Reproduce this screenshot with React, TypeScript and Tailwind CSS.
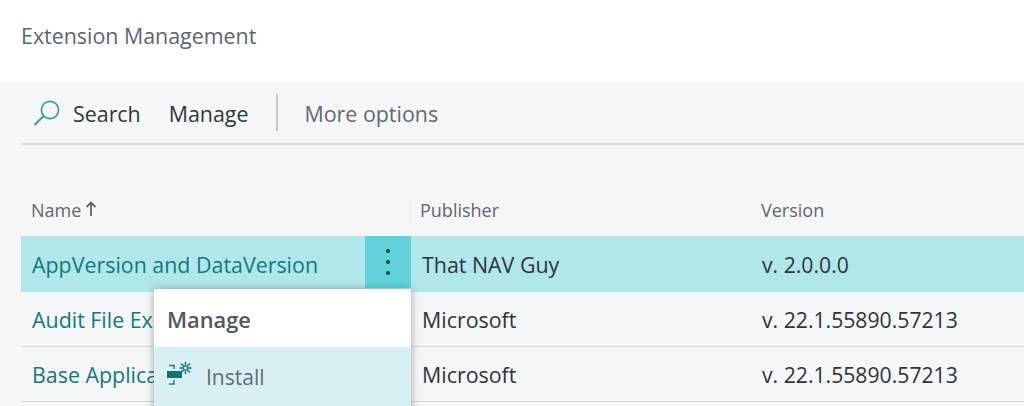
const font = { fontFamily: '"Open Sans", "Noto Sans", sans-serif' };

function SearchIcon() {
  return (
    <svg width="28" height="28" viewBox="0 0 28 28" fill="none" stroke="#3f9d97" strokeWidth="1.7">
      <circle cx="17" cy="11" r="8.6" />
      <path d="M10.7 17 L1.5 26" strokeWidth="2" />
    </svg>
  );
}

function InstallIcon() {
  return (
    <svg width="27" height="24" viewBox="0 0 27 24" fill="none">
      <path d="M3 3.5H8V7" stroke="#1f7f7c" strokeWidth="1.4" />
      <rect x="1" y="9" width="15" height="7" fill="#0c7577" />
      <path d="M3 22H8V18" stroke="#1f7f7c" strokeWidth="1.4" />
      <path d="M19.5 0V12M13.5 6H25.5M15 1.5L24 10.5M24 1.5L15 10.5" stroke="#0c7577" strokeWidth="1.5" />
      <circle cx="19.5" cy="6" r="1.5" fill="#d9f0f3" />
    </svg>
  );
}

function Row({ name, pub, ver, selected }: { name: string; pub: string; ver: string; selected?: boolean }) {
  return (
    <div className={selected ? "flex h-[56px] items-center bg-[#b0e7ea]" : "flex h-[55px] items-center border-b border-[#d4d6d9]"}>
      <div className="flex h-full w-[390px] items-center justify-between">
        <span className="pl-[11px] pt-[2px] text-[21.4px] whitespace-nowrap text-[#0f7a7c]">{name}</span>
        {selected && (
          <div className="mb-[4px] flex h-[52px] w-[46px] flex-col items-center justify-center gap-[7px] self-end bg-[#62d3da]">
            <span className="h-[4px] w-[4px] rounded-full bg-[#1f4245]" />
            <span className="h-[4px] w-[4px] rounded-full bg-[#1f4245]" />
            <span className="h-[4px] w-[4px] rounded-full bg-[#1f4245]" />
          </div>
        )}
      </div>
      <div className="w-[340px] pl-[11px] pt-[2px] text-[21.4px] text-[#2f3437]">{pub}</div>
      <div className="pl-[11px] pt-[2px] text-[21.2px] text-[#2f3437]">{ver}</div>
    </div>
  );
}

export default function App() {
  return (
    <div style={font} className="relative h-[406px] w-[1024px] overflow-hidden bg-[#f5f6f8]">
      <div className="flex h-[82px] items-center bg-white pb-[9px] pl-[21px] text-[21.4px] text-[#5b6570]">
        Extension Management
      </div>
      <div className="ml-[21px]">
        <div className="flex h-[63px] items-center border-b-2 border-[#d6d8db] text-[21.4px]">
          <div className="ml-[12px]"><SearchIcon /></div>
          <span className="ml-[12px] mt-[3px] text-[#30373c]">Search</span>
          <span className="ml-[28px] mt-[3px] text-[#30373c]">Manage</span>
          <span className="ml-[27px] h-[37px] w-[2px] bg-[#c4c7ca]" />
          <span className="ml-[27px] mt-[3px] text-[#5f6b75]">More options</span>
        </div>
        <div className="flex h-[91px] items-end pb-[12px] text-[18px] text-[#5f6770]">
          <div className="flex w-[390px] items-center border-r border-[#f0f1f3] pl-[10px]">
            Name
            <svg className="ml-[4px] mt-[-3px]" width="12" height="16" viewBox="0 0 12 16" fill="none" stroke="#5f6770" strokeWidth="1.8">
              <path d="M6 15V2M1.5 6L6 1.5L10.5 6" />
            </svg>
          </div>
          <div className="w-[340px] pl-[9px]">Publisher</div>
          <div className="pl-[10px]">Version</div>
        </div>
        <Row selected name="AppVersion and DataVersion" pub="That NAV Guy" ver="v. 2.0.0.0" />
        <Row name="Audit File Ex" pub="Microsoft" ver="v. 22.1.55890.57213" />
        <Row name="Base Applica" pub="Microsoft" ver="v. 22.1.55890.57213" />
      </div>
      <div className="absolute left-[154px] top-[289px] w-[257px] bg-white shadow-[0_1px_8px_rgba(0,0,0,0.35)]">
        <div className="flex h-[58px] items-center pl-[13px] pt-[4px] text-[21.8px] font-semibold text-[#505861]">Manage</div>
        <div className="flex h-[70px] items-start bg-[#d9f0f3] pl-[12px] pt-[15px] text-[21px] text-[#5f6b75]">
          <InstallIcon />
          <span className="ml-[13px]">Install</span>
        </div>
      </div>
    </div>
  );
}
